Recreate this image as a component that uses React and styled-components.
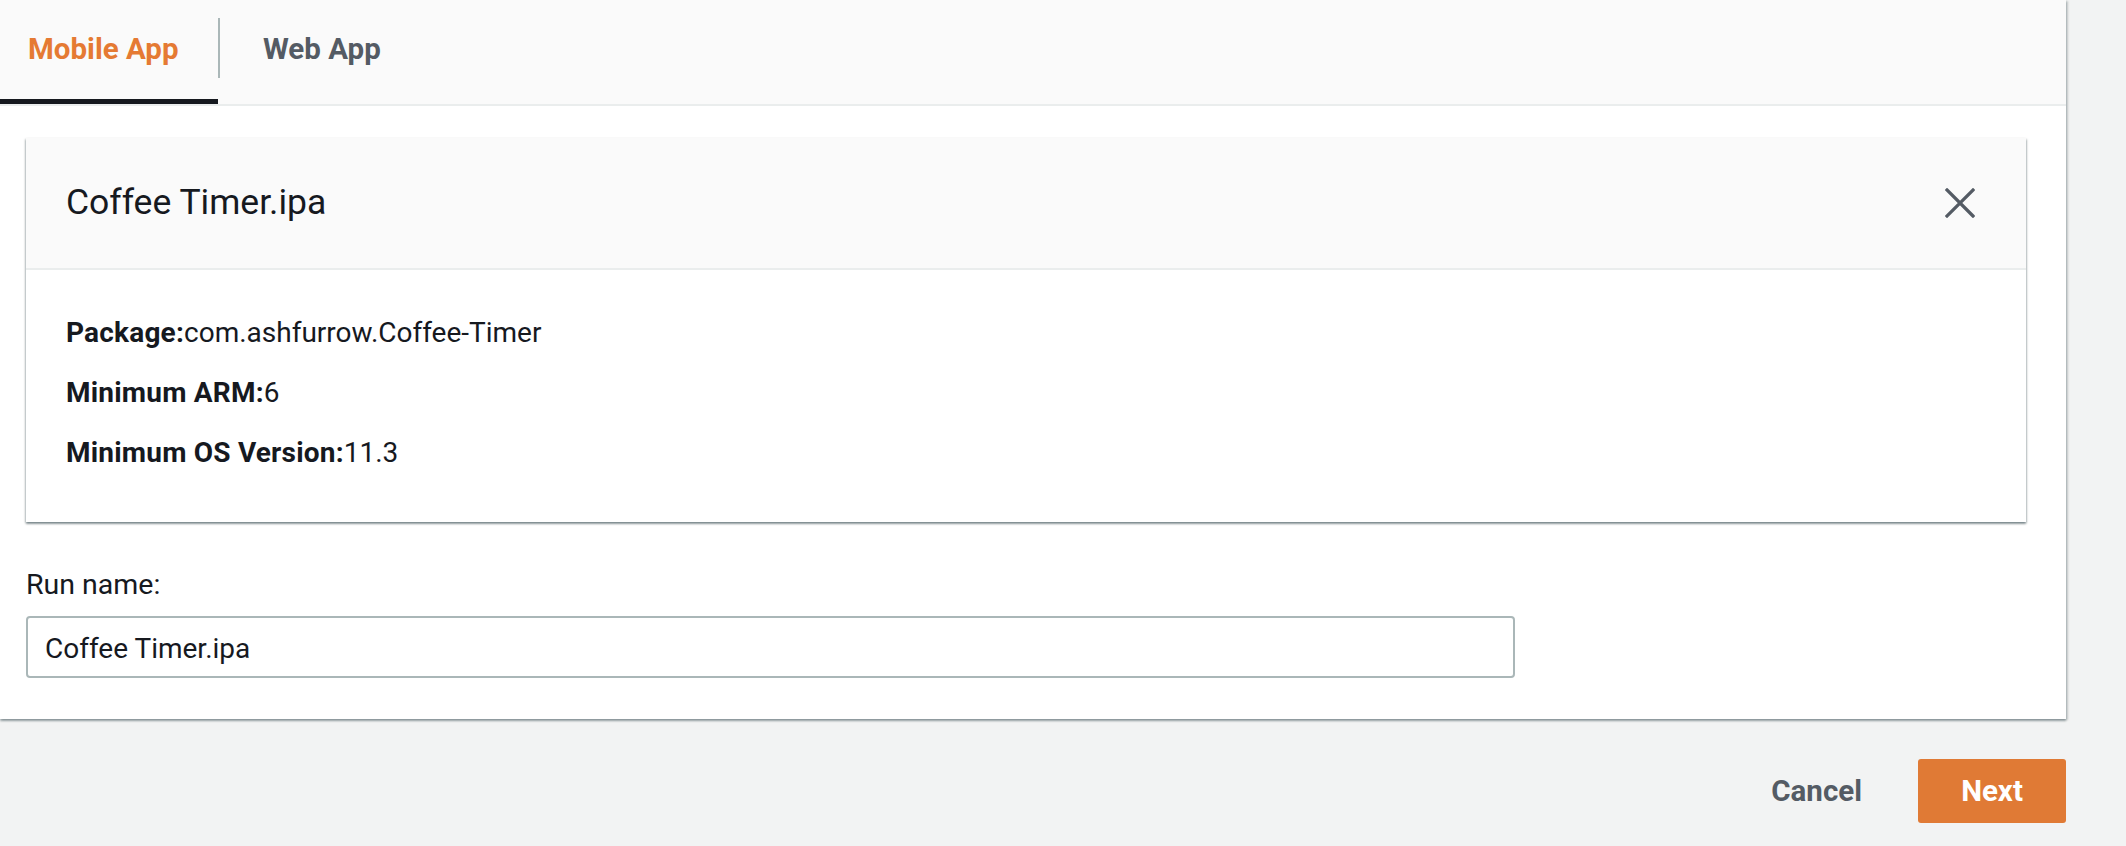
import React from 'react';
import styled, { createGlobalStyle } from 'styled-components';

const GlobalStyle = createGlobalStyle`
	html,
	body {
		margin: 0;
		padding: 0;
		background-color: #f2f3f3;
		font-family: Roboto, 'Liberation Sans', sans-serif;
		color: #16191f;
	}
	* {
		box-sizing: border-box;
	}
`;

const Page = styled.div`
	width: 2126px;
	min-height: 846px;
	background-color: #f2f3f3;
`;

const Panel = styled.div`
	width: 2066px;
	background-color: #ffffff;
	box-shadow: 0 2px 2px 0 rgba(0, 28, 36, 0.35), 2px 1px 2px 0 rgba(0, 28, 36, 0.18);
`;

const TabBar = styled.div`
	display: flex;
	height: 106px;
	background-color: #fafafa;
	border-bottom: 2px solid #eaeded;
`;

const Tab = styled.div`
	width: ${(p) => p.width}px;
	height: 104px;
	padding: 32px 0 0 ${(p) => p.pad}px;
	font-size: 29.5px;
	font-weight: 700;
	line-height: 34px;
	color: ${(p) => (p.active ? '#e57a33' : '#545b64')};
	border-bottom: 5px solid ${(p) => (p.active ? '#16191f' : 'transparent')};
	white-space: nowrap;
`;

const Divider = styled.div`
	width: 2px;
	height: 60px;
	margin-top: 18px;
	background-color: #aab7b8;
`;

const Content = styled.div`
	padding: 32px 40px 41px 26px;
`;

const Card = styled.div`
	background-color: #ffffff;
	box-shadow: 0 2px 2px 0 rgba(0, 28, 36, 0.35), 1px 1px 2px 0 rgba(0, 28, 36, 0.18),
		-1px 1px 2px 0 rgba(0, 28, 36, 0.18);
`;

const CardHeader = styled.div`
	display: flex;
	align-items: center;
	justify-content: space-between;
	height: 132px;
	padding: 0 50px 2px 40px;
	background-color: #fafafa;
	border-bottom: 2px solid #eaeded;
	h2 {
		margin: 0;
		font-size: 35.5px;
		font-weight: 400;
		color: #16191f;
	}
`;

const CloseButton = styled.button`
	display: flex;
	align-items: center;
	justify-content: center;
	width: 32px;
	height: 32px;
	padding: 0;
	margin-top: 2px;
	border: none;
	background: none;
	color: #545b64;
`;

const CardBody = styled.div`
	padding: 33px 40px 39px;
`;

const InfoRow = styled.p`
	margin: 0;
	font-size: 28px;
	line-height: 60px;
	color: #16191f;
	b {
		font-weight: 700;
		letter-spacing: 0.2px;
	}
`;

const Label = styled.label`
	display: block;
	margin: 47px 0 15px;
	font-size: 28.5px;
	line-height: 32px;
	color: #16191f;
`;

const Input = styled.input`
	display: block;
	width: 1489px;
	height: 62px;
	padding: 3px 17px 0;
	font-family: Roboto, 'Liberation Sans', sans-serif;
	font-size: 28px;
	color: #16191f;
	border: 2px solid #aab7b8;
	border-radius: 4px;
	background-color: #ffffff;
	outline: none;
`;

const Footer = styled.div`
	display: flex;
	justify-content: flex-end;
	align-items: center;
	width: 2066px;
	padding-top: 40px;
	gap: 26px;
`;

const Button = styled.button`
	height: 64px;
	padding: 0 ${(p) => (p.primary ? '40px' : '30px')};
	min-width: ${(p) => (p.primary ? '148px' : 'auto')};
	font-family: Roboto, 'Liberation Sans', sans-serif;
	font-size: 29.5px;
	font-weight: 700;
	color: ${(p) => (p.primary ? '#ffffff' : '#545b64')};
	background-color: ${(p) => (p.primary ? '#e07a35' : 'transparent')};
	border: none;
	border-radius: 3px;
`;

const CloseIcon = () => (
	<svg width='30' height='30' viewBox='0 0 30 30'>
		<path d='M2 2 L28 28 M28 2 L2 28' stroke='currentColor' strokeWidth='3.2' strokeLinecap='square' fill='none' />
	</svg>
);

const App = () => {
	const info = [
		['Package:', 'com.ashfurrow.Coffee-Timer'],
		['Minimum ARM:', '6'],
		['Minimum OS Version:', '11.3'],
	];

	return (
		<Page>
			<GlobalStyle />
			<Panel>
				<TabBar>
					<Tab active width={218} pad={28}>
						Mobile App
					</Tab>
					<Divider />
					<Tab width={300} pad={43}>
						Web App
					</Tab>
				</TabBar>
				<Content>
					<Card>
						<CardHeader>
							<h2>Coffee Timer.ipa</h2>
							<CloseButton aria-label='close'>
								<CloseIcon />
							</CloseButton>
						</CardHeader>
						<CardBody>
							{info.map(([k, v]) => (
								<InfoRow key={k}>
									<b>{k}</b>
									{v}
								</InfoRow>
							))}
						</CardBody>
					</Card>
					<Label htmlFor='run-name'>Run name:</Label>
					<Input id='run-name' defaultValue='Coffee Timer.ipa' />
				</Content>
			</Panel>
			<Footer>
				<Button>Cancel</Button>
				<Button primary>Next</Button>
			</Footer>
		</Page>
	);
};

export default App;
